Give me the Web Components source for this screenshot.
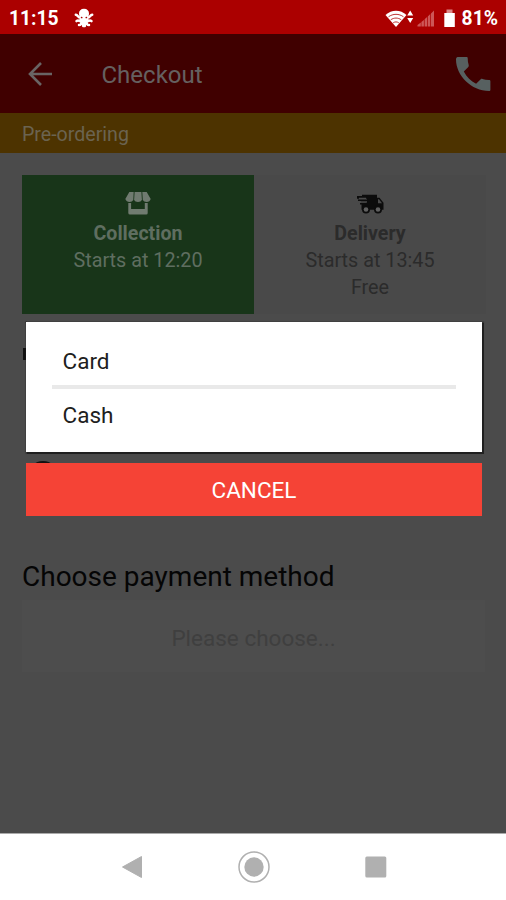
<!DOCTYPE html>
<html lang="en">
<head>
<meta charset="utf-8">
<title>Checkout</title>
<style>
html,body{margin:0;height:100%}
body{font-family:Roboto,"Liberation Sans",sans-serif;overflow:hidden}
</style>
</head>
<body>
<checkout-app></checkout-app>
<script>
const define = (name, html) => customElements.define(name, class extends HTMLElement {
  constructor() {
    super();
    const t = document.createElement('template');
    t.innerHTML = html;
    this.attachShadow({mode: 'open'}).append(t.content.cloneNode(true));
  }
});

define('status-bar', `
<style>
:host{display:flex;align-items:center;box-sizing:border-box;height:34px;padding:3px 8px 0 9px;background:#ab0000;color:#fff;font-size:19.300px;font-weight:700;line-height:22px}
.pet{margin-left:15px;margin-top:-2px}
.right{margin-left:auto;display:flex;align-items:center}
svg{display:block}
</style>
<span>11:15</span>
<svg class="pet" width="20" height="20" viewBox="0 0 20 20" fill="none" stroke="#fff" stroke-width="2.500" stroke-linecap="round"><path d="M10 .8c-3.200 0-5 2.100-5 4.700 0 2 .7 3 1 4.500l-.5 4.500h9L14 10c.3-1.500 1-2.500 1-4.500 0-2.600-1.800-4.700-5-4.700z" fill="#fff" stroke="none"/><path d="M6.500 9.700C4 9.700 4 7 1.800 6.700M13.500 9.700c2.500 0 2.500-2.700 4.700-3M7 12c-2 1.500-3-.2-4.500 1.200M13 12c2 1.500 3-.2 4.500 1.200M7.500 13c0 3-.5 4-2.500 4M12.500 13c0 3 .5 4 2.500 4M9.200 13.500v4.500M10.800 13.500v4.500"/><path d="M7.600 9.500h.1M12.300 9.500h.1" stroke="#ab0000" stroke-width="1.700"/></svg>
<div class="right">
<svg width="77" height="22" viewBox="0 0 77 22"><g transform="translate(0 -.5)">
<path d="M.5 7.500C6.500 1.700 15.500 1.700 21.500 7.500L11 19.500z" fill="#fff"/><path d="M3.500 9.300c4.500-3.300 10.500-3.300 15 0M5.700 12.300c3.300-2.300 7.300-2.300 10.600 0M8.200 15.300c1.800-1.200 3.800-1.200 5.600 0" fill="none" stroke="#ab0000" stroke-width=".8"/>
<path d="M25.200 3l3 5h-6zM25.200 15.500l3-5h-6z" fill="#fff"/>
<g fill="#d67070"><path d="M32.500 19v-1.500l3.300-2.500v4zM36.400 19v-4.500l2.500-2v6.500zM39.600 19v-7.300l2.500-2.200V19zM42.800 19V9l2.500-2.500V19zM46 19V6l3-3v16z" opacity=".78"/></g>
<path d="M61.500 2h6v3.500h-6z" fill="#dc8787"/><path d="M59.300 5.500h10.500V19.500H59.300z" fill="#fff"/></g></svg>
<span>81%</span></div>`);

define('app-header', `
<style>
:host{display:flex;align-items:center;height:79px;background:#400000;color:#656060;font-size:24px;box-sizing:border-box;padding:0 15px 0 27px}
svg{display:block}
.title{margin-left:48.500px;line-height:30px;padding-top:2px}
.phone{margin-left:auto}
</style>
<svg width="26" height="26" viewBox="0 0 26 26" fill="none" stroke="#696464" stroke-width="2.600"><path d="M14 2L3 13l11 11M3 13h22"/></svg>
<span class="title">Checkout</span>
<svg class="phone" width="36" height="36" viewBox="0 0 36 36" fill="#576060"><path d="M3.500 1H11.500c.8 0 1.200.5 1.200 1.300 0 2.400.3 4.700 1 6.800.2.700.1 1.300-.4 1.900L8.800 15.400c3 5.600 7 9.600 12.300 12.300l4.600-4.500c.6-.5 1.100-.6 1.800-.3 2 .7 4.100 1 6.500 1 .9 0 1.400.5 1.400 1.300v8.500c0 .8-.5 1.300-1.300 1.300C16.400 35 1 19.500 1 3.500 1 1.600 2 1 3.500 1z"/></svg>`);

define('notice-bar', `
<style>:host{display:flex;align-items:center;box-sizing:border-box;height:40px;padding:2px 22px 0;background:#4d3300;color:#6b6350;font-size:19.600px}</style><slot></slot>`);

define('order-option', `
<style>
:host{display:flex;flex-direction:column;align-items:center;box-sizing:border-box;height:139px;padding-top:15px;background:#494949;color:#2b2b2b;font-size:19.800px;line-height:27px}
:host([selected]){background:#183519;color:#5f6e60}
.name{font-weight:700;font-size:19.600px}
.icon{height:30px}
</style>
<div class="icon"><slot name="icon"></slot></div>
<div class="name"><slot name="name"></slot></div><slot></slot>`);

define('payment-field', `
<style>
:host{display:block;margin:245px 21px 0 22px}
h2{margin:0;font-size:28px;font-weight:400;line-height:36px;color:#050505}
.box{display:flex;align-items:center;justify-content:center;margin-top:5px;height:72px;background:#4d4d4d;color:#3f3f3f;font-size:22.500px;padding-top:3px;box-sizing:border-box}
</style>
<h2>Choose payment method</h2><div class="box">Please choose...</div>`);

define('payment-dialog', `
<style>
:host{display:block}
.list{box-sizing:border-box;height:130px;padding:12px 26px 10px;background:#fff;box-shadow:0 0 1px 1.500px #202020;color:#202020;font-size:22.500px}
.row{height:51px;line-height:54px;padding-left:10.500px}
.row+.row{border-top:4px solid #e9e9e9;line-height:52px}
.cancel{display:block;width:100%;height:53px;margin-top:11px;padding:0;border:0;background:#f54336;color:#fff;font:22.500px Roboto,"Liberation Sans",sans-serif}
</style>
<div class="list"><div class="row">Card</div><div class="row">Cash</div></div><button class="cancel">CANCEL</button>`);

define('nav-bar', `
<style>
:host{display:flex;justify-content:center;align-items:center;height:67px;background:#fff;gap:94px;border-top:1px solid #aaa;box-sizing:border-box;padding-left:1px}
svg{display:block}
</style>
<svg width="22" height="24" viewBox="0 0 22 24" fill="#b0b0b0"><path d="M1.500 12L20.500 1.500v21z" stroke="#b0b0b0" stroke-linejoin="round"/></svg>
<svg width="34" height="34" viewBox="0 0 34 34"><circle cx="17" cy="17" r="15" fill="none" stroke="#b0b0b0" stroke-width="1.500"/><circle cx="17" cy="17" r="9.700" fill="#b0b0b0"/></svg>
<svg width="22" height="22" viewBox="0 0 22 22"><rect x=".300" y=".500" width="21" height="21" rx="1.500" fill="#b0b0b0"/></svg>`);

define('checkout-app', `
<style>
:host{display:flex;flex-direction:column;position:relative;width:506px;height:900px;background:#4b4b4b}
.options{display:grid;grid-template-columns:232px 232px;padding:22px 22px 0}
payment-dialog{position:absolute;left:26px;top:322px;width:456px}
nav-bar{margin-top:auto}
.peek{position:absolute;background:#111}
.a{left:23px;top:348px;width:3px;height:12px}
.b{left:35px;top:461px;width:16px;height:6px;border-radius:50% 50% 0 0}
svg{display:block}
</style>
<status-bar></status-bar>
<app-header></app-header>
<notice-bar>Pre-ordering</notice-bar>
<div class="options">
<order-option selected>
<svg slot="icon" width="26" height="26" viewBox="0 0 26 26" fill="#707b70"><path d="M4.300 2H8.700L8.300 10Q7.300 12 4.500 12 1.500 12 .3 9zM9.600 2h6.800l.5 8Q16 12 13 12 10 12 9.100 10zM17.300 2h4.400l4 7q-1 3-4 3-2.900 0-3.900-2z"/><path d="M3.300 13h2.800v6h13.700v-6h2.900v10q0 1.500-1.500 1.500H5Q3.300 24.500 3.300 23z"/></svg>
<span slot="name">Collection</span><div>Starts at 12:20</div></order-option>
<order-option>
<svg slot="icon" width="28" height="26" viewBox="0 0 28 26" fill="#0c0c0c"><g transform="translate(0 .7)"><path d="M6 4h15v3h2.500l4 5v7H5.500V13h5v-1.500H5V10h6V8H1V6h5z"/><path d="M22 8.500h1l3 4h-4z" fill="#494949"/><path d="M1 6h10M2 9.500h10M4 13h8" stroke="#0c0c0c" stroke-width="1.500"/><path d="M3 7.700h7M4 11.200h7" stroke="#494949" stroke-width="1.300"/><circle cx="10" cy="18.800" r="4"/><circle cx="22" cy="18.800" r="4"/><circle cx="10" cy="18.800" r="2.300" fill="#606060"/><circle cx="22" cy="18.800" r="2.300" fill="#606060"/></g></svg>
<span slot="name">Delivery</span><div>Starts at 13:45</div><div>Free</div></order-option>
</div>
<payment-field></payment-field>
<nav-bar></nav-bar>
<i class="peek a"></i><i class="peek b"></i>
<payment-dialog></payment-dialog>`);
</script>
</body>
</html>
